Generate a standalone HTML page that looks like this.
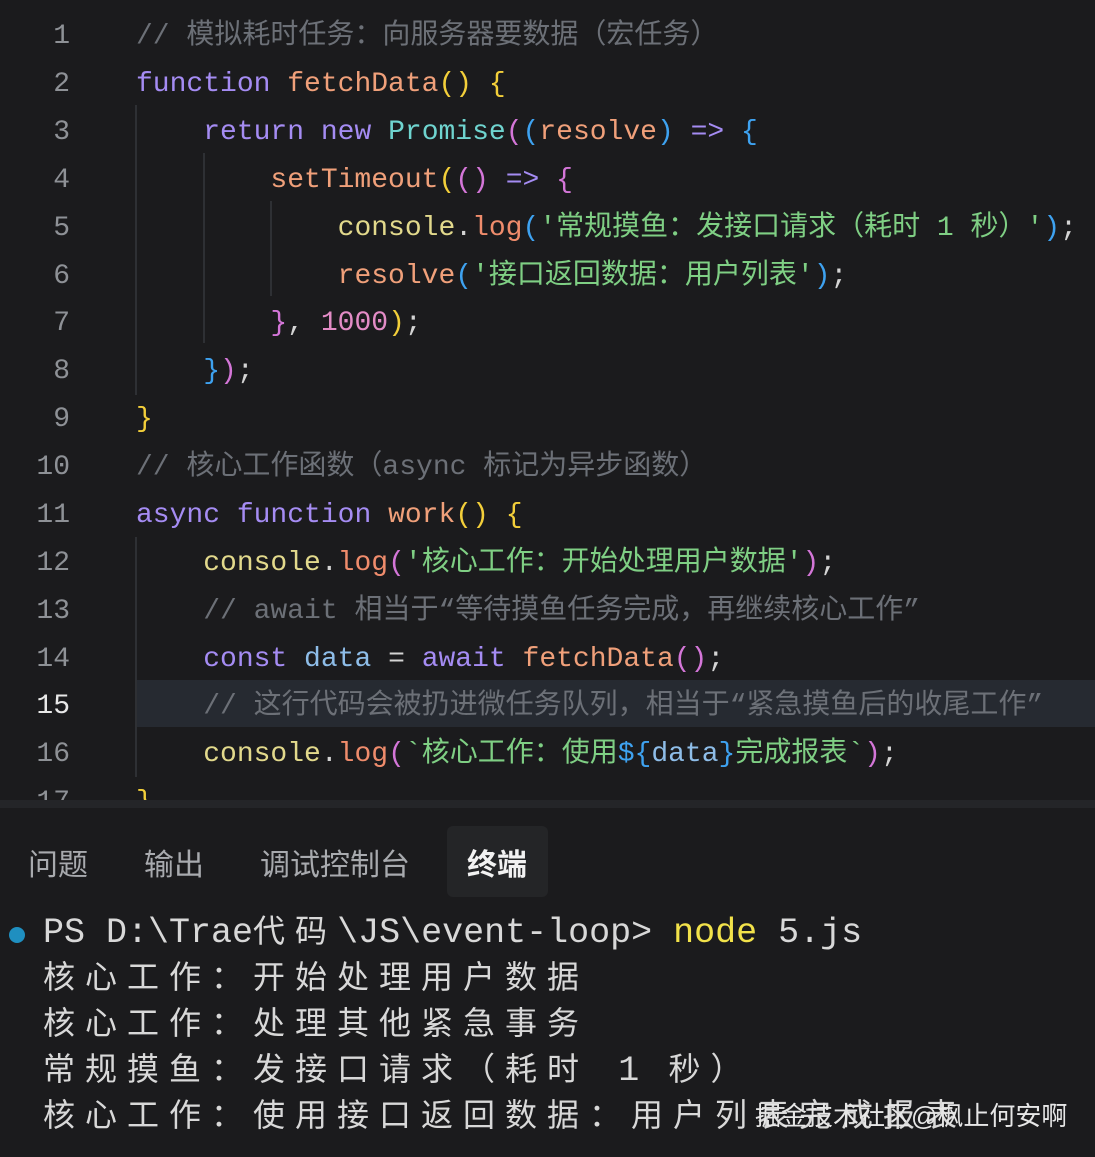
<!DOCTYPE html>
<html><head><meta charset="utf-8"><style>
html,body{margin:0;padding:0;background:#1b1b1d;width:1095px;height:1157px;overflow:hidden;position:relative}
.code{position:absolute;left:0;top:0;width:1095px;height:800px;overflow:hidden}
.ln{position:absolute;left:0;width:70px;text-align:right;font:28px "Liberation Mono","Noto Sans CJK SC",monospace;color:#8e9196;line-height:48px}
.l{position:absolute;left:136px;white-space:pre;font:28px "Liberation Mono","Noto Sans CJK SC",monospace;color:#d4d4d4;line-height:48px}
.g{position:absolute;width:2px;background:#2e3034}
.cm{color:#6c7077}.kw{color:#a58cf3}.fn{color:#f0a07a}.y{color:#f3cf3a}.p{color:#d476d8}.b{color:#3ea2f0}.t{color:#6fd4cf}.cs{color:#e2d98c}.lg{color:#ef8c6c}.s{color:#7fcf84}.n{color:#e38cc6}.v{color:#8ebde8}.w{color:#d4d4d4}
.term{position:absolute;left:0;top:800px;width:1095px;height:357px;background:#1b1b1d}
.sep{position:absolute;left:0;top:0;width:1095px;height:8px;background:#242528}
.tab{position:absolute;top:40px;font:30px "Liberation Sans","Noto Sans CJK SC",sans-serif;color:#a8aaae}
.tl{position:absolute;left:43px;white-space:pre;font:35px "Liberation Mono","Noto Sans CJK SC",monospace;color:#d8d8d8;line-height:46px}
.c{font-size:32px;letter-spacing:10px}
</style></head><body>
<div class="code">
<div style="position:absolute;left:136px;top:680px;width:959px;height:47px;background:#262a31"></div>
<div class="g" style="left:135px;top:105px;height:290px"></div>
<div class="g" style="left:203px;top:153px;height:190px"></div>
<div class="g" style="left:270px;top:201px;height:95px"></div>
<div class="g" style="left:135px;top:537px;height:240px"></div>
<div class="ln" style="top:13px">1</div><div class="ln" style="top:61px">2</div><div class="ln" style="top:109px">3</div><div class="ln" style="top:157px">4</div><div class="ln" style="top:205px">5</div><div class="ln" style="top:253px">6</div><div class="ln" style="top:300px">7</div><div class="ln" style="top:348px">8</div><div class="ln" style="top:396px">9</div><div class="ln" style="top:444px">10</div><div class="ln" style="top:492px">11</div><div class="ln" style="top:540px">12</div><div class="ln" style="top:588px">13</div><div class="ln" style="top:636px">14</div><div class="ln" style="top:683px;color:#e8e8e8">15</div><div class="ln" style="top:731px">16</div><div class="ln" style="top:779px">17</div>
<div class="l" style="top:13px"><span class="cm">// 模拟耗时任务：向服务器要数据（宏任务）</span></div>
<div class="l" style="top:61px"><span class="kw">function</span> <span class="fn">fetchData</span><span class="y">()</span> <span class="y">{</span></div>
<div class="l" style="top:109px">    <span class="kw">return</span> <span class="kw">new</span> <span class="t">Promise</span><span class="p">(</span><span class="b">(</span><span class="fn">resolve</span><span class="b">)</span> <span class="kw">=&gt;</span> <span class="b">{</span></div>
<div class="l" style="top:157px">        <span class="fn">setTimeout</span><span class="y">(</span><span class="p">()</span> <span class="kw">=&gt;</span> <span class="p">{</span></div>
<div class="l" style="top:205px">            <span class="cs">console</span>.<span class="lg">log</span><span class="b">(</span><span class="s">'常规摸鱼：发接口请求（耗时 1 秒）'</span><span class="b">)</span>;</div>
<div class="l" style="top:253px">            <span class="fn">resolve</span><span class="b">(</span><span class="s">'接口返回数据：用户列表'</span><span class="b">)</span>;</div>
<div class="l" style="top:300px">        <span class="p">}</span>, <span class="n">1000</span><span class="y">)</span>;</div>
<div class="l" style="top:348px">    <span class="b">}</span><span class="p">)</span>;</div>
<div class="l" style="top:396px"><span class="y">}</span></div>
<div class="l" style="top:444px"><span class="cm">// 核心工作函数（async 标记为异步函数）</span></div>
<div class="l" style="top:492px"><span class="kw">async</span> <span class="kw">function</span> <span class="fn">work</span><span class="y">()</span> <span class="y">{</span></div>
<div class="l" style="top:540px">    <span class="cs">console</span>.<span class="lg">log</span><span class="p">(</span><span class="s">'核心工作：开始处理用户数据'</span><span class="p">)</span>;</div>
<div class="l" style="top:588px">    <span class="cm">// await 相当于“等待摸鱼任务完成，再继续核心工作”</span></div>
<div class="l" style="top:636px">    <span class="kw">const</span> <span class="v">data</span> = <span class="kw">await</span> <span class="fn">fetchData</span><span class="p">()</span>;</div>
<div class="l" style="top:683px">    <span class="cm">// 这行代码会被扔进微任务队列，相当于“紧急摸鱼后的收尾工作”</span></div>
<div class="l" style="top:731px">    <span class="cs">console</span>.<span class="lg">log</span><span class="p">(</span><span class="s">`核心工作：使用</span><span class="b">${</span><span class="v">data</span><span class="b">}</span><span class="s">完成报表`</span><span class="p">)</span>;</div>
<div class="l" style="top:779px"><span class="y">}</span></div>
</div>
<div class="term">
<div class="sep"></div>
<div style="position:absolute;left:447px;top:26px;width:101px;height:71px;background:#242527;border-radius:6px"></div>
<div class="tab" style="left:28px">问题</div>
<div class="tab" style="left:144px">输出</div>
<div class="tab" style="left:260px">调试控制台</div>
<div class="tab" style="left:467px;color:#f2f2f2;font-weight:bold">终端</div>
<div style="position:absolute;left:9px;top:127px;width:16px;height:16px;border-radius:50%;background:#1f8fc0"></div>
<div class="tl" style="top:110px">PS D:\Trae<span class="c">代码</span>\JS\event-loop&gt; <span style="color:#f2e24a">node</span> 5.js</div>
<div class="tl" style="top:156px"><span class="c">核心工作：开始处理用户数据</span></div>
<div class="tl" style="top:202px"><span class="c">核心工作：处理其他紧急事务</span></div>
<div class="tl" style="top:248px"><span class="c">常规摸鱼：发接口请求（耗时 </span>1<span class="c"> 秒）</span></div>
<div class="tl" style="top:294px"><span class="c">核心工作：使用接口返回数据：用户列表完成报表</span></div>
<div style="position:absolute;left:755px;top:296px;font:26px 'Liberation Sans','Noto Sans CJK SC',sans-serif;color:#e6e6e6;white-space:nowrap">掘金技术社区@枫止何安啊</div>
</div>
</body></html>
